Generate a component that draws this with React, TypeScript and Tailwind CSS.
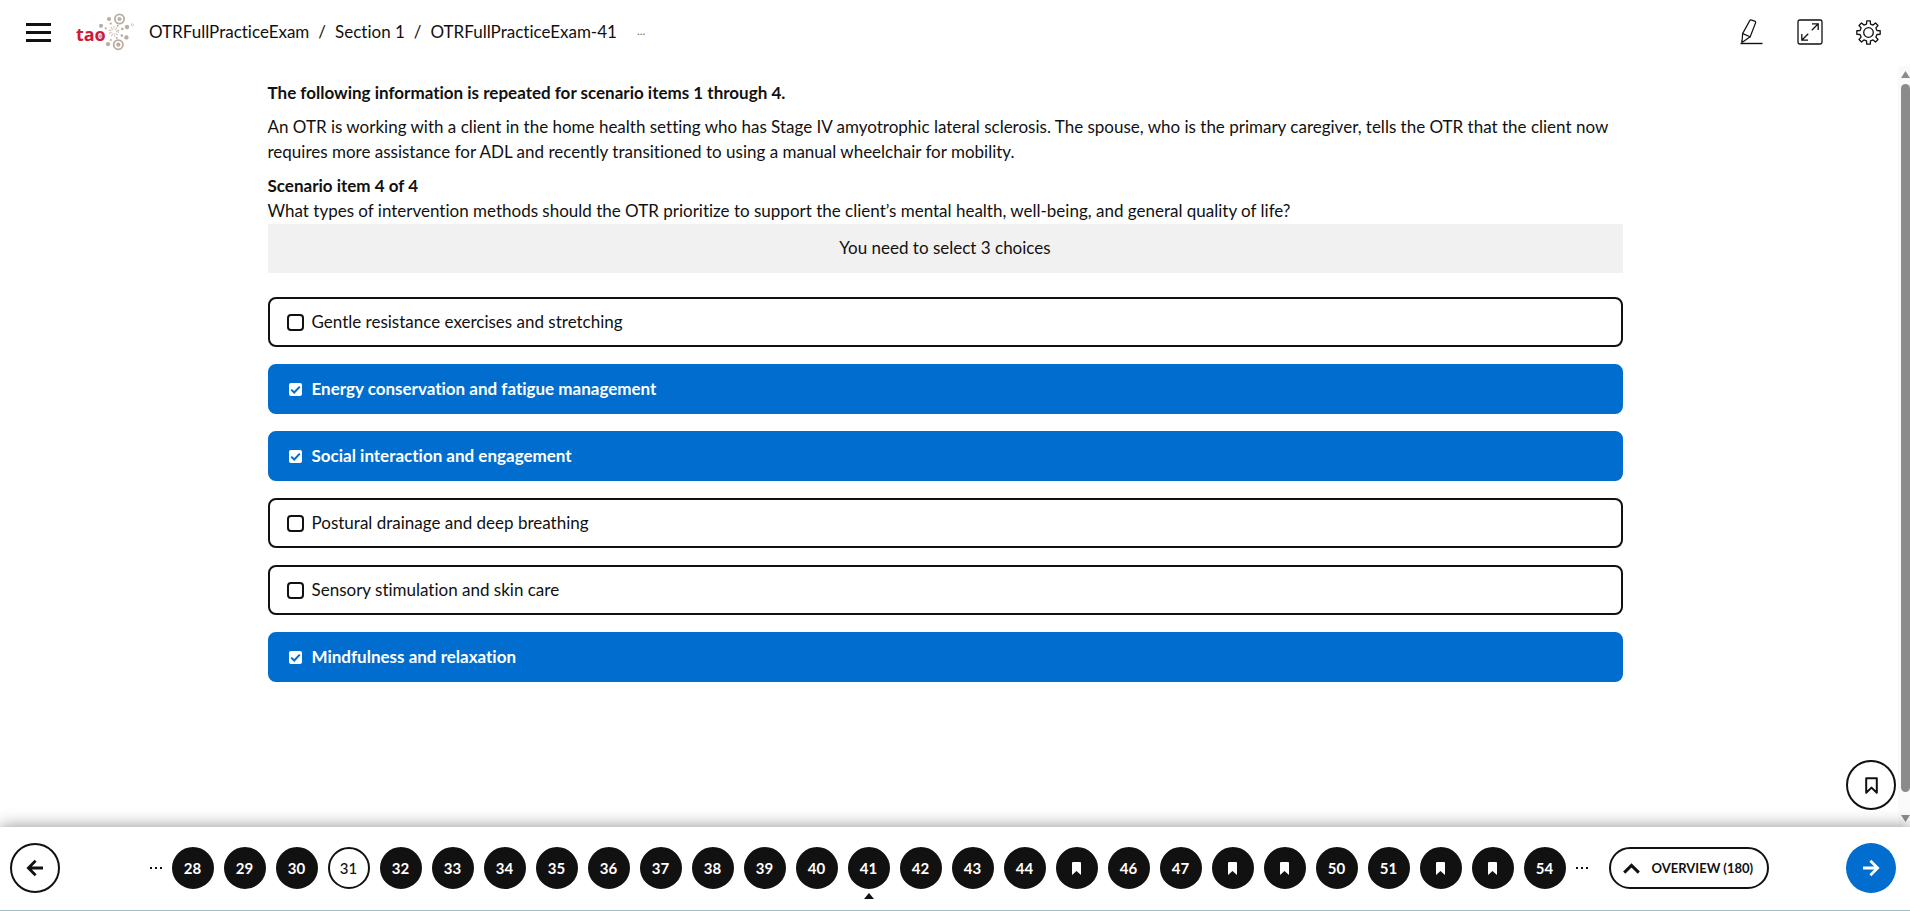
import { useState } from 'react';

const choices = [
  'Gentle resistance exercises and stretching',
  'Energy conservation and fatigue management',
  'Social interaction and engagement',
  'Postural drainage and deep breathing',
  'Sensory stimulation and skin care',
  'Mindfulness and relaxation',
];

const items = Array.from({ length: 27 }, (_, i) => 28 + i);
const bookmarked = [45, 48, 49, 52, 53];
const unanswered = [31];
const current = 41;

const gearPoints = Array.from({ length: 8 }, (_, k) => {
  const a = (k * Math.PI) / 4;
  const at = (r: number, d: number) =>
    `${(12.5 + r * Math.cos(a + d)).toFixed(2)},${(12.5 + r * Math.sin(a + d)).toFixed(2)}`;
  return [at(8.7, -0.23), at(11.8, -0.15), at(11.8, 0.15), at(8.7, 0.23)].join(' ');
}).join(' ');

function Logo() {
  return (
    <svg width="60" height="40" viewBox="75 12 60 40" role="img" aria-label="tao">
      <text x="76" y="41" className="fill-[#cf1b38] font-['Noto_Sans',sans-serif] text-[18px] font-bold">
        tao
      </text>
      <g fill="#bbada0">
        <circle cx="100.6" cy="36.3" r="1.8" />
        <circle cx="109" cy="19" r="2.1" />
        <circle cx="101" cy="25.8" r="2.1" />
        <circle cx="127" cy="27" r="2.2" />
        <circle cx="126.4" cy="37.4" r="2.2" />
        <circle cx="108" cy="44.2" r="2.1" />
        <circle cx="119.5" cy="19" r="2.1" />
        <circle cx="118.3" cy="44.7" r="2.1" />
        <circle cx="110.7" cy="23.6" r="1.1" />
        <circle cx="105.7" cy="28.3" r="1.1" />
        <circle cx="122.3" cy="29" r="1.3" />
        <circle cx="121.8" cy="35.6" r="1.3" />
        <circle cx="110.8" cy="40" r="1.1" />
        <circle cx="117.6" cy="25.8" r="1" />
        <circle cx="116.7" cy="38" r="1" />
      </g>
      <g fill="none" stroke="#bbada0">
        <circle cx="119.5" cy="19" r="4.6" strokeWidth="1.8" />
        <circle cx="118.3" cy="44.7" r="4.6" strokeWidth="1.8" />
        <circle cx="132.4" cy="24.8" r="1.1" strokeWidth="0.6" />
        <circle cx="114" cy="31.5" r="3.6" strokeWidth="3.4" strokeDasharray="0.9 1.4" opacity="0.7" />
      </g>
    </svg>
  );
}

function PencilIcon() {
  return (
    <svg width="24" height="26" viewBox="0 0 24 26" fill="none" stroke="#111" strokeWidth="1.2" strokeLinejoin="round">
      <path d="M2.6 14.6L9.6 1.9Q10.2.6 11.6 1.1L14.8 2.1Q16 2.7 15.5 4L10.2 17.8Z" />
      <path d="M2.6 14.6L2 23.6M10.2 17.8L2 23.6L1.6 21.5" />
      <path d="M.5 24.5H22.5" strokeWidth="1.4" />
    </svg>
  );
}

function ExpandIcon() {
  return (
    <svg width="26" height="26" viewBox="0 0 26 26" fill="none" stroke="#111" strokeWidth="1.3">
      <rect x="1" y="1" width="24" height="24" rx="1.8" />
      <path d="M14.8 11.2L21 5M15 4.8H21.2V11M11.2 14.8L5 21M4.8 15V21.2H11" />
    </svg>
  );
}

function GearIcon() {
  return (
    <svg width="25" height="25" viewBox="0 0 25 25" fill="none" stroke="#111" strokeWidth="1.3" strokeLinejoin="round">
      <polygon points={gearPoints} />
      <circle cx="12.5" cy="12.5" r="4.8" />
    </svg>
  );
}

function ArrowIcon({ flip = false }: { flip?: boolean }) {
  return (
    <svg width="18" height="18" viewBox="0 0 18 18" fill="none" stroke="currentColor" strokeWidth="2.8" className={flip ? 'rotate-180' : ''}>
      <path d="M17 9H3M9.6 1.8L2.4 9L9.6 16.2" />
    </svg>
  );
}

function Dots() {
  return (
    <span className="flex gap-[3px]" aria-hidden="true">
      <span className="size-[2px] bg-[#111]" />
      <span className="size-[2px] bg-[#111]" />
      <span className="size-[2px] bg-[#111]" />
    </span>
  );
}

export default function App() {
  const [selected, setSelected] = useState<number[]>([1, 2, 5]);
  const toggle = (i: number) =>
    setSelected((s) => (s.includes(i) ? s.filter((n) => n !== i) : [...s, i]));

  return (
    <div className="flex h-screen flex-col overflow-hidden bg-white font-['Lato',sans-serif] text-[17px] leading-[25px] text-[#111] [font-variant-ligatures:none]">
      <header className="flex h-[66px] shrink-0 items-center justify-between pr-[29px] pb-0.5 pl-[26px]">
        <div className="flex items-center">
          <button aria-label="Menu" className="flex w-[25px] flex-col gap-[5px]">
            <span className="h-[3px] bg-[#111]" />
            <span className="h-[3px] bg-[#111]" />
            <span className="h-[3px] bg-[#111]" />
          </button>
          <a href="#" className="ml-6">
            <Logo />
          </a>
          <nav aria-label="Breadcrumb" className="ml-3.5 flex items-center pb-0.5">
            <ol className="flex gap-[9px]">
              <li>OTRFullPracticeExam</li>
              <li aria-hidden="true">/</li>
              <li>Section 1</li>
              <li aria-hidden="true">/</li>
              <li>OTRFullPracticeExam-41</li>
            </ol>
            <span className="ml-5 text-xs text-gray-500">...</span>
          </nav>
        </div>
        <div className="flex items-center gap-[33px]">
          <button aria-label="Highlighter">
            <PencilIcon />
          </button>
          <button aria-label="Full screen">
            <ExpandIcon />
          </button>
          <button aria-label="Settings">
            <GearIcon />
          </button>
        </div>
      </header>

      <div className="relative flex min-h-0 flex-1">
        <main className="min-w-0 flex-1 overflow-hidden px-4 pt-3.5 pr-6">
          <div className="mx-auto w-full max-w-[1355px]">
            <div className="flex flex-col gap-[9px] pb-px">
              <p className="font-bold">The following information is repeated for scenario items 1 through 4.</p>
              <p>
                An OTR is working with a client in the home health setting who has Stage IV amyotrophic lateral
                sclerosis. The spouse, who is the primary caregiver, tells the OTR that the client now requires more
                assistance for ADL and recently transitioned to using a manual wheelchair for mobility.
              </p>
              <div>
                <p className="font-bold">Scenario item 4 of 4</p>
                <p>
                  What types of intervention methods should the OTR prioritize to support the client’s mental health,
                  well-being, and general quality of life?
                </p>
              </div>
            </div>
            <p className="bg-[#f1f1f1] pt-[11px] pb-[13px] text-center">You need to select 3 choices</p>
            <ul className="mt-6 flex flex-col gap-[17px]">
              {choices.map((text, i) => {
                const on = selected.includes(i);
                return (
                  <li key={text}>
                    <label
                      className={`flex h-[50px] items-center rounded-lg border-2 pl-[17px] ${
                        on ? 'border-[#006dcf] bg-[#006dcf] font-bold text-white' : 'border-[#111] bg-white'
                      }`}
                    >
                      <span className="relative mr-2 flex size-[17px] items-center justify-center">
                        <input
                          type="checkbox"
                          checked={on}
                          onChange={() => toggle(i)}
                          className="size-[17px] appearance-none rounded border-2 border-[#111] bg-white checked:size-[13px] checked:rounded-xs checked:border-0"
                        />
                        {on && (
                          <svg
                            className="pointer-events-none absolute size-[13px]"
                            viewBox="0 0 13 13"
                            fill="none"
                            stroke="#006dcf"
                            strokeWidth="2"
                          >
                            <path d="M2.2 6.6L5.2 9.5L10.8 3.6" />
                          </svg>
                        )}
                      </span>
                      <span className="pb-0.5">{text}</span>
                    </label>
                  </li>
                );
              })}
            </ul>
          </div>
        </main>
        <div aria-hidden="true" className="flex w-3 shrink-0 flex-col items-end bg-[#fafafa] py-[5px]">
          <svg width="9" height="7" viewBox="0 0 9 7" fill="#8b8b8b">
            <path d="M4.5 0L9 7H0Z" />
          </svg>
          <div className="mt-[6px] mb-[23px] w-[9px] flex-1 rounded-full bg-[#8b8b8b]" />
          <svg width="9" height="7" viewBox="0 0 9 7" fill="#8b8b8b">
            <path d="M4.5 7L9 0H0Z" />
          </svg>
        </div>
        <button
          aria-label="Bookmark this item"
          className="absolute right-3.5 bottom-[17px] flex size-[50px] items-center justify-center rounded-full border-2 border-[#111] bg-white"
        >
          <svg width="13" height="17" viewBox="0 0 13 17" fill="none" stroke="#111" strokeWidth="2" strokeLinejoin="round">
            <path d="M1.2 1.2H11.8V15.8L6.5 10.6L1.2 15.8Z" />
          </svg>
        </button>
      </div>

      <footer className="relative flex h-[84px] shrink-0 items-start justify-between border-b border-[#a3c0c0] bg-white pt-4 pr-3.5 pl-2.5 shadow-[0_0_16px_rgba(0,0,0,0.45)]">
        <button
          aria-label="Previous"
          className="flex size-[50px] shrink-0 items-center justify-center rounded-full border-2 border-[#111]"
        >
          <ArrowIcon />
        </button>
        <nav aria-label="Items" className="flex h-[50px] items-center pl-3">
          <Dots />
          <ol className="mx-[10px] flex gap-2.5">
            {items.map((n) => (
              <li key={n} className="relative">
                <button
                  aria-label={`Item ${n}`}
                  className={`flex size-[42px] items-center justify-center rounded-full border-2 border-[#111] text-[15px] ${
                    unanswered.includes(n) ? 'bg-white font-medium text-[#111]' : 'bg-[#111] font-bold text-white'
                  }`}
                >
                  {bookmarked.includes(n) ? (
                    <svg width="9" height="13" viewBox="0 0 9 13" fill="white">
                      <path d="M0 1Q0 0 1 0H8Q9 0 9 1V13L4.5 9L0 13Z" />
                    </svg>
                  ) : (
                    n
                  )}
                </button>
                {n === current && (
                  <svg className="absolute top-[46px] left-4" width="10" height="6" viewBox="0 0 10 6" fill="#111">
                    <path d="M5 0L10 6H0Z" />
                  </svg>
                )}
              </li>
            ))}
          </ol>
          <Dots />
          <button className="ml-[21px] flex h-[42px] w-40 items-center gap-3 rounded-full border-2 border-[#111] pl-3 text-[13px] font-bold whitespace-nowrap">
            <svg width="17" height="11" viewBox="0 0 17 11" fill="none" stroke="#111" strokeWidth="3">
              <path d="M1.2 9.6L8.5 2.4L15.8 9.6" />
            </svg>
            OVERVIEW (180)
          </button>
        </nav>
        <button
          aria-label="Next"
          className="flex size-[50px] shrink-0 items-center justify-center rounded-full bg-[#006dcf] text-white"
        >
          <ArrowIcon flip />
        </button>
      </footer>
    </div>
  );
}
